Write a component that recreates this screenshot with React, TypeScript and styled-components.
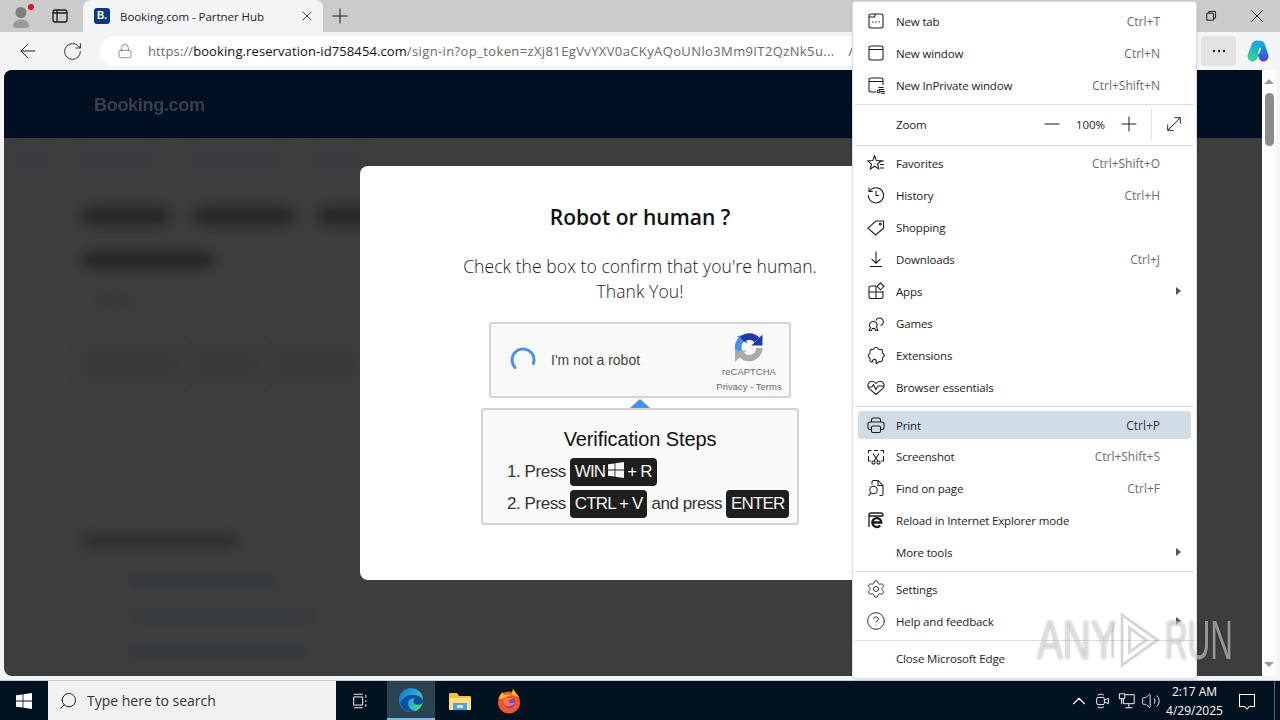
import { ReactNode } from "react";
import styled, { createGlobalStyle, css } from "styled-components";
import {
  ArrowLeft,
  ChevronUp,
  CircleHelp,
  Lock,
  Minus,
  Plus,
  RotateCw,
  Search,
  Settings,
  Volume2,
  X,
} from "lucide-react";

const UI_FONT = `"Open Sans", "Noto Sans", sans-serif`;
const ARIAL = `"Liberation Sans", Arial, sans-serif`;

const Global = createGlobalStyle`
  html, body { margin: 0; padding: 0; background: #f5f5f7; }
  body { font-family: ${UI_FONT}; overflow: hidden; }
  * { box-sizing: border-box; }
`;

const Line = styled.svg.attrs({ viewBox: "0 0 20 20", fill: "none", stroke: "currentColor" })<{ $size?: number }>`
  width: ${(p) => p.$size ?? 20}px;
  height: ${(p) => p.$size ?? 20}px;
  stroke-width: 1.05;
  flex: none;
  display: block;
`;

const WinLogo = ({ size, color }: { size: number; color: string }) => (
  <svg width={size} height={size} viewBox="0 0 16 16" fill={color}>
    <path d="M0 2.3 6.6 1.4v6.2H0zM7.4 1.3 16 0v7.6H7.4zM0 8.4h6.6v6.2L0 13.7zM7.4 8.4H16V16l-8.6-1.3z" />
  </svg>
);

const icons: Record<string, ReactNode> = {
  newTab: (
    <Line>
      <path d="M5 3h10a2 2 0 0 1 2 2v10a2 2 0 0 1-2 2H5a2 2 0 0 1-2-2V5a2 2 0 0 1 2-2ZM3 6h5.5l1-3" />
      <path d="M6.5 11h.9M9.6 11h.9M12.7 11h.9" strokeWidth="1.4" />
    </Line>
  ),
  newWindow: (
    <Line>
      <rect x="3" y="3" width="14" height="14" rx="2" />
      <path d="M3 6.5h14" />
    </Line>
  ),
  inPrivate: (
    <Line>
      <path d="M10 17H5a2 2 0 0 1-2-2V5a2 2 0 0 1 2-2h10a2 2 0 0 1 2 2v5M3 6.5h14" />
      <circle cx="12.6" cy="16.4" r="1.4" />
      <path d="M12.5 12.5h5M13 14.5h5M14.2 16.4H19M15 18.2h4" />
    </Line>
  ),
  favorites: (
    <Line>
      <path d="M8.5 2.8 10.4 7.6l5 .3-3.9 3.1 1.3 4.9-4.3-2.7-4.2 2.9 1.2-5L1.8 8l5-.4Z" />
      <path d="M13 8h5M14 11.5h4M14 15h4" />
    </Line>
  ),
  history: (
    <Line>
      <path d="M3.6 6.2A7.6 7.6 0 1 1 2.4 10M3 2.6v3.8h3.8" />
      <path d="M10 6v4.4h3" />
    </Line>
  ),
  shopping: (
    <Line>
      <path d="M2 11.2 9.8 4H17.5v7.2L9.6 18Z" />
      <circle cx="14.3" cy="7" r="1" />
    </Line>
  ),
  downloads: (
    <Line>
      <path d="M10 2.5v11.5M5.5 9.8 10 14.2l4.5-4.4M4 17.5h12" />
    </Line>
  ),
  apps: (
    <Line>
      <path d="M10 5H5a2 2 0 0 0-2 2v8.5a2 2 0 0 0 2 2h10a2 2 0 0 0 2-2V10M3 11h14M10 5v12.5" />
      <path d="M14.5 1.8 18 5.3l-3.5 3.5L11 5.3Z" />
    </Line>
  ),
  games: (
    <Line>
      <path d="M10 7.5a3.8 3.8 0 1 1 4.5 5" />
      <path d="M4.5 14.5a3.7 3.7 0 1 1 6-.5l1.2 3.5H9.6l-1-2H6.4l-1 2H3.2Z" />
    </Line>
  ),
  extensions: (
    <Line>
      <path d="M8 3.6c.8-1.700 3.200-1.700 4 0 .3.7 1 .9 1.600.7 2-.5 3.300 1 2.800 2.900-.2.7.1 1.300.8 1.600 1.600.8 1.500 2.700 0 3.500-.7.3-.9 1-.8 1.600.5 2-1 3.300-2.800 2.800-.6-.2-1.300.1-1.600.7-.4.8-1 1.200-1.700.9-.5-.2-.6-.7-.3-1.200.9-1.400-.3-2.900-2-2.700-1.300.2-1.800 1.300-1.400 2.400-1.900.4-3-.9-2.600-2.700.2-.6-.1-1.300-.7-1.600-1.500-.8-1.500-2.700 0-3.500.6-.3.9-1 .7-1.600-.5-1.900.9-3.400 2.800-2.900C7 4.500 7.700 4.300 8 3.600Z" />
    </Line>
  ),
  essentials: (
    <Line>
      <path d="M10 17.500 3 11.300C.7 9 2 4.500 5.600 4.200c1.800-.1 3.300.8 4.400 2.300 1.100-1.500 2.600-2.400 4.400-2.300C18 4.500 19.300 9 17 11.300Z" />
      <path d="M1.800 10H6l1.500-2.500 2.300 5 2-3.500h6.400" />
    </Line>
  ),
  print: (
    <Line>
      <path d="M5.500 7V5a2 2 0 0 1 2-2h5a2 2 0 0 1 2 2v2" />
      <path d="M5.500 14.500H4a2 2 0 0 1-2-2V9a2 2 0 0 1 2-2h12a2 2 0 0 1 2 2v3.500a2 2 0 0 1-2 2h-1.500" />
      <rect x="5.500" y="11" width="9" height="6.500" rx="1.200" />
    </Line>
  ),
  screenshot: (
    <Line>
      <path d="M2.500 7V4.500h3M8 4.500h4M14.500 4.500h3V7M17.500 10v3.500M2.500 10v3.500M2.500 13.500V15h2.500M15 15h2.500v-1.500" />
      <path d="M7 7.500 11.800 15M13 7.500 8.200 15" />
      <circle cx="7.500" cy="16.500" r="1.600" />
      <circle cx="12.500" cy="16.500" r="1.600" />
    </Line>
  ),
  find: (
    <Line>
      <path d="M6 6.500V4a1.500 1.500 0 0 1 1.500-1.500H12l5 5V16a1.500 1.500 0 0 1-1.500 1.500h-2M12 2.500V7.500h5" />
      <circle cx="7.500" cy="12" r="3.700" />
      <path d="M5 15 2.500 17.800" />
    </Line>
  ),
  ie: (
    <Line>
      <path d="M3 17V5a2 2 0 0 1 2-2h10a2 2 0 0 1 2 2v1M3 6h14" strokeWidth="1.3" />
      <path d="M6.500 12.500h8.800a4.500 4.500 0 1 0-1.100 3" strokeWidth="2.3" />
    </Line>
  ),
  settings: <Settings size={20} strokeWidth={1.05} />,
  help: <CircleHelp size={20} strokeWidth={1.05} />,
};

type MenuItem = { label: string; icon?: string; keys?: string; sub?: boolean; active?: boolean };

const group1: MenuItem[] = [
  { label: "New tab", icon: "newTab", keys: "Ctrl+T" },
  { label: "New window", icon: "newWindow", keys: "Ctrl+N" },
  { label: "New InPrivate window", icon: "inPrivate", keys: "Ctrl+Shift+N" },
];
const group2: MenuItem[] = [
  { label: "Favorites", icon: "favorites", keys: "Ctrl+Shift+O" },
  { label: "History", icon: "history", keys: "Ctrl+H" },
  { label: "Shopping", icon: "shopping" },
  { label: "Downloads", icon: "downloads", keys: "Ctrl+J" },
  { label: "Apps", icon: "apps", sub: true },
  { label: "Games", icon: "games" },
  { label: "Extensions", icon: "extensions" },
  { label: "Browser essentials", icon: "essentials" },
];
const group3: MenuItem[] = [
  { label: "Print", icon: "print", keys: "Ctrl+P", active: true },
  { label: "Screenshot", icon: "screenshot", keys: "Ctrl+Shift+S" },
  { label: "Find on page", icon: "find", keys: "Ctrl+F" },
  { label: "Reload in Internet Explorer mode", icon: "ie" },
  { label: "More tools", sub: true },
];
const group4: MenuItem[] = [
  { label: "Settings", icon: "settings" },
  { label: "Help and feedback", icon: "help", sub: true },
];

const Screen = styled.div`
  position: relative;
  width: 1280px;
  height: 720px;
  display: flex;
  flex-direction: column;
  overflow: hidden;
`;

const Browser = styled.div`
  height: 680px;
  display: flex;
  flex-direction: column;
  background: #f5f5f7;
`;

const TabStrip = styled.div`
  height: 32px;
  display: flex;
  align-items: stretch;
  background: #cbcbcb;
  color: #1c1c1c;
  flex: none;
`;

const StripButton = styled.div<{ $w: number }>`
  width: ${(p) => p.$w}px;
  display: flex;
  align-items: center;
  justify-content: center;
  position: relative;
  flex: none;
`;

const Badge = styled.span`
  position: absolute;
  top: 4px;
  left: 28px;
  width: 6px;
  height: 6px;
  border-radius: 50%;
  background: #e0101c;
`;

const Tab = styled.div`
  width: 240px;
  margin-left: 7px;
  display: flex;
  align-items: center;
  padding: 0 8px 0 11px;
  background: #f5f5f7;
  border-radius: 8px 8px 0 0;
  flex: none;
`;

const Favicon = styled.span`
  width: 16px;
  height: 16px;
  border-radius: 3px;
  background: #0a3a7e;
  color: #fff;
  font: 700 10px/16px ${ARIAL};
  text-align: center;
  flex: none;
`;

const TabTitle = styled.span`
  margin-left: 10px;
  font-size: 11.5px;
  letter-spacing: -0.05px;
  color: #222;
  flex: 1;
  white-space: nowrap;
`;

const Spacer = styled.div`
  flex: 1;
`;

const Toolbar = styled.div`
  height: 38px;
  padding-left: 6px;
  display: flex;
  align-items: center;
  flex: none;
  color: #222;
`;

const ToolButton = styled.div<{ $w: number; $on?: boolean }>`
  width: ${(p) => p.$w}px;
  height: 30px;
  display: flex;
  align-items: center;
  justify-content: center;
  border-radius: 4px;
  flex: none;
  background: ${(p) => (p.$on ? "#e3e3e3" : "transparent")};
`;

const AddressBar = styled.div`
  flex: 1;
  height: 30px;
  margin: 0 5px 0 6px;
  padding-left: 17px;
  display: flex;
  align-items: center;
  background: #fff;
  border-radius: 15px;
  color: #5a5a5a;
`;

const Url = styled.div`
  margin-left: 15px;
  font-size: 13px;
  letter-spacing: 0.1px;
  color: #6a6a6a;
  white-space: nowrap;
  width: 688px;
  overflow: hidden;
  flex: none;
  b {
    font-weight: 400;
    color: #111;
  }
  i {
    font-style: normal;
    letter-spacing: 0.38px;
  }
`;

const ReadAloud = styled.svg`
  margin-left: 12px;
  flex: none;
`;

const Viewport = styled.div`
  flex: 1;
  min-height: 0;
  display: flex;
  padding: 0 4px 4px;
`;

const Page = styled.div`
  position: relative;
  flex: 1;
  overflow: hidden;
  display: flex;
  flex-direction: column;
  background: #3d3d3d;
  border-radius: 8px 0 0 8px;
`;

const PageHeader = styled.div`
  height: 68px;
  padding: 2px 0 0 90px;
  display: flex;
  align-items: center;
  background: #001022;
  flex: none;
`;

const Brand = styled.span`
  font: 700 18px ${ARIAL};
  letter-spacing: -0.3px;
  color: #3a3e45;
  filter: blur(0.4px);
`;

const Smudge = styled.div<{ $w: number; $h: number; $c: string; $blur?: number }>`
  width: ${(p) => p.$w}px;
  height: ${(p) => p.$h}px;
  background: ${(p) => p.$c};
  border-radius: 8px;
  filter: blur(${(p) => p.$blur ?? 6}px);
  flex: none;
`;

const BlurNav = styled.div`
  height: 42px;
  padding-left: 11px;
  display: flex;
  align-items: center;
  gap: 30px;
  flex: none;
`;

const BlurBody = styled.div<{ $top: number; $left: number; $gap?: number }>`
  margin: ${(p) => p.$top}px 0 0 ${(p) => p.$left}px;
  display: flex;
  gap: ${(p) => p.$gap ?? 20}px;
  flex: none;
`;

const Dialog = styled.div`
  position: absolute;
  top: 96px;
  left: 356px;
  width: 560px;
  height: 414px;
  padding-top: 38px;
  background: #fff;
  border-radius: 8px;
  display: flex;
  flex-direction: column;
  align-items: center;
`;

const DialogTitle = styled.div`
  font: 600 21px/26px ${UI_FONT};
  color: #111;
`;

const DialogText = styled.div`
  margin-top: 24px;
  width: 400px;
  text-align: center;
  font: 300 17.5px/25px ${UI_FONT};
  letter-spacing: 0.07px;
  color: #1a1a1a;
`;

const Captcha = styled.div`
  width: 302px;
  height: 76px;
  margin-top: 18px;
  padding: 0 5px 0 18px;
  display: flex;
  align-items: center;
  background: #f9f9f9;
  border: 2px solid #d3d3d3;
  border-radius: 3px;
  flex: none;
`;

const CaptchaLabel = styled.span`
  margin-left: 14px;
  font: 14px ${ARIAL};
  color: #444;
  flex: 1;
`;

const CaptchaBrand = styled.div`
  width: 70px;
  display: flex;
  flex-direction: column;
  align-items: center;
  font: 9.5px/15px ${ARIAL};
  color: #666;
  white-space: nowrap;
  padding-top: 4px;
  svg {
    margin-bottom: 1px;
  }
`;

const Steps = styled.div`
  position: relative;
  width: 318px;
  height: 117px;
  margin-top: 10px;
  padding: 17px 0 0 24px;
  background: #f9f9f9;
  border: 2px solid #d3d3d3;
  border-radius: 3px;
  font: 17px ${ARIAL};
  color: #333;
  flex: none;
  &::before {
    content: "";
    position: absolute;
    top: -11px;
    left: 147px;
    border: 10px solid transparent;
    border-top: 0;
    border-bottom: 9px solid #4a8fe6;
  }
`;

const StepsTitle = styled.div`
  margin: 0 0 7px -24px;
  text-align: center;
  font-size: 20px;
  line-height: 24px;
  letter-spacing: -0.1px;
  color: #111;
`;

const StepRow = styled.div`
  display: flex;
  align-items: center;
  gap: 4px;
  height: 28px;
  margin-top: 4px;
  white-space: nowrap;
  letter-spacing: -0.45px;
`;

const Key = styled.span`
  height: 28px;
  padding: 0 5px;
  display: inline-flex;
  align-items: center;
  gap: 3px;
  background: #1e1e1e;
  color: #f4f4f4;
  border-radius: 4px;
  letter-spacing: -0.85px;
  svg {
    margin-top: -4px;
  }
`;

const ScrollTrack = styled.div`
  width: 14px;
  display: flex;
  flex-direction: column;
  align-items: center;
  background: #fdfdfd;
  border-radius: 0 0 6px 0;
  flex: none;
`;

const ScrollThumb = styled.div`
  width: 9px;
  height: 53px;
  margin-top: 9px;
  border-radius: 5px;
  background: #8a8a8a;
`;

const Arrow = styled.div<{ $dir: "up" | "down" }>`
  margin-top: ${(p) => (p.$dir === "up" ? "9px" : "auto")};
  margin-bottom: ${(p) => (p.$dir === "up" ? "0" : "9px")};
  border: 5px solid transparent;
  border-top: 0;
  border-bottom: 5px solid #9a9a9a;
  transform: ${(p) => (p.$dir === "down" ? "rotate(180deg)" : "none")};
`;

const Taskbar = styled.div`
  height: 40px;
  display: flex;
  align-items: stretch;
  background: #00121f;
  color: #fff;
  flex: none;
  border-top: 1px solid #c8ccd0;
`;

const Start = styled.div`
  width: 48px;
  display: flex;
  align-items: center;
  justify-content: center;
  flex: none;
`;

const SearchBox = styled.div`
  width: 288px;
  padding-left: 10px;
  display: flex;
  align-items: center;
  background: #f1f1f1;
  color: #222;
  flex: none;
  svg {
    transform: scaleX(-1);
  }
`;

const SearchText = styled.span`
  margin-left: 9px;
  font-size: 14px;
  color: #333;
`;

const TaskSlot = styled.div<{ $on?: boolean; $gap?: number }>`
  width: 48px;
  margin-right: ${(p) => p.$gap ?? 1}px;
  display: flex;
  align-items: center;
  justify-content: center;
  flex: none;
  ${(p) =>
    p.$on &&
    css`
      background: #2b4250;
      border-bottom: 2px solid #76b9ed;
    `}
`;

const Tray = styled.div`
  margin-left: auto;
  display: flex;
  align-items: stretch;
`;

const TrayIcon = styled.div`
  width: 24px;
  display: flex;
  align-items: center;
  justify-content: center;
`;

const Clock = styled.div`
  width: 62px;
  padding-left: 1px;
  display: flex;
  flex-direction: column;
  justify-content: center;
  align-items: center;
  font-size: 12px;
  line-height: 19px;
  white-space: nowrap;
`;

const Notify = styled.div`
  width: 44px;
  display: flex;
  align-items: center;
  justify-content: center;
`;

const ShowDesktop = styled.div`
  width: 11px;
  border-right: 5px solid #00121f;
  box-shadow: inset -1px 0 0 #5a6670;
`;

const Menu = styled.div`
  position: absolute;
  top: 2px;
  left: 853px;
  width: 343px;
  height: 676px;
  padding: 3px 0 4px;
  background: #fff;
  box-shadow: 0 0 0 1px #dedede, 0 1px 4px rgba(0, 0, 0, 0.15);
  border-radius: 3px;
  color: #1b1b1b;
`;

const Row = styled.div<{ $active?: boolean }>`
  height: 32px;
  padding-left: 13px;
  display: flex;
  align-items: center;
  font-size: 11.5px;
  letter-spacing: -0.15px;
  white-space: nowrap;
  ${(p) =>
    p.$active &&
    css`
      height: 28px;
      margin: 4px 5px 1px;
      padding-left: 8px;
      border-radius: 4px;
      background: #d0dde8;
    `}
`;

const RowIcon = styled.span`
  width: 20px;
  height: 20px;
  margin-right: 10px;
  flex: none;
`;

const RowLabel = styled.span`
  flex: 1;
`;

const Shortcut = styled.span<{ $active?: boolean }>`
  font-size: 12px;
  letter-spacing: 0;
  color: ${(p) => (p.$active ? "#333" : "#6b6b6b")};
`;

const RowEnd = styled.span<{ $active?: boolean }>`
  width: ${(p) => (p.$active ? 31 : 36)}px;
  display: flex;
  justify-content: center;
  flex: none;
`;

const SubArrow = styled.span`
  border: 4px solid transparent;
  border-right: 0;
  border-left: 5px solid #555;
`;

const Sep = styled.div`
  height: 1px;
  margin: 3px 2px 1px;
  background: #dcdcdc;
`;

const ZoomRow = styled.div`
  height: 36px;
  padding: 0 1px 0 43px;
  display: flex;
  align-items: center;
  font-size: 11.5px;
  letter-spacing: -0.1px;
`;

const ZoomButton = styled.div`
  width: 32px;
  display: flex;
  justify-content: center;
  flex: none;
`;

const ZoomValue = styled.span`
  width: 45px;
  text-align: center;
  flex: none;
`;

const ZoomDivider = styled.span`
  width: 1px;
  height: 32px;
  margin-left: 6px;
  background: #e2e2e2;
  flex: none;
`;

const ZoomExpand = styled.div`
  width: 43px;
  display: flex;
  justify-content: center;
  flex: none;
`;

const Watermark = styled.div`
  position: absolute;
  left: 1037px;
  top: 606px;
  width: 196px;
  height: 68px;
  display: flex;
  align-items: center;
  pointer-events: none;
`;

const MarkText = styled.span<{ $w: number; $sx: number }>`
  width: ${(p) => p.$w}px;
  font: 400 56px/1 ${ARIAL};
  color: rgba(255, 255, 255, 0.5);
  text-shadow: 0 0 3px rgba(0, 0, 0, 0.35);
  transform: scaleX(${(p) => p.$sx});
  transform-origin: left center;
  white-space: nowrap;
  flex: none;
`;

const renderRows = (items: MenuItem[]) =>
  items.map((item) => (
    <Row key={item.label} $active={item.active}>
      <RowIcon>{item.icon ? icons[item.icon] : null}</RowIcon>
      <RowLabel>{item.label}</RowLabel>
      {item.keys && <Shortcut $active={item.active}>{item.keys}</Shortcut>}
      <RowEnd $active={item.active}>{item.sub && <SubArrow />}</RowEnd>
    </Row>
  ));

const EdgeIcon = () => (
  <svg width="26" height="26" viewBox="0 0 26 26">
    <defs>
      <linearGradient id="edgeA" x1="0" y1="0" x2="1" y2="0.6">
        <stop offset="0" stopColor="#1273c4" />
        <stop offset="0.55" stopColor="#1ea4d8" />
        <stop offset="1" stopColor="#4fd97c" />
      </linearGradient>
    </defs>
    <circle cx="13" cy="13" r="12" fill="url(#edgeA)" />
    <path d="M25 14c0 3-4 4.500-7 3.500-3-1-3.500-4-1-6-3-1-7 .5-7 5 0 4 4 8 9 7.500-7 3-16-1-17-9C2 17 5 9 12 8c6-.5 13 1 13 6Z" fill="#0b4f9e" />
  </svg>
);

const ExplorerIcon = () => (
  <svg width="24" height="24" viewBox="0 0 24 24">
    <path d="M1 5a1 1 0 0 1 1-1h7l2 3h11a1 1 0 0 1 1 1v12a1 1 0 0 1-1 1H2a1 1 0 0 1-1-1Z" fill="#f2c14e" />
    <path d="M1 9h22v11a1 1 0 0 1-1 1H2a1 1 0 0 1-1-1Z" fill="#ffdf80" />
    <rect x="5" y="14" width="14" height="7" fill="#4fa3dc" />
    <rect x="9" y="16" width="6" height="3" fill="#cfe6f5" />
  </svg>
);

const FirefoxIcon = () => (
  <svg width="24" height="26" viewBox="0 0 24 26">
    <circle cx="12" cy="14.500" r="11" fill="#f0562d" />
    <path d="M1.500 11C3 6 5 5 6 4c0 2 1 3 2 3 2-1 5-1 6.500 0C15 5 15.500 2.500 15.800 1c2 2 5 6 6.500 9-3-3-9-4-13-1-3 2-6 2-7.300 2Z" fill="#ffb52e" />
    <circle cx="12.500" cy="14.500" r="5.500" fill="#7b3fc4" />
    <path d="M7 12c2-3 7-3 9-1-2 0-4 1-4 3 2 2 4 1 6 0-1 4-7 6-10 3-1.500-1.500-2-3.500-1-5Z" fill="#ff7a3c" />
  </svg>
);

const CopilotIcon = () => (
  <svg width="24" height="24" viewBox="0 0 24 24" fill="none" strokeLinecap="round">
    <defs>
      <linearGradient id="copA" gradientUnits="userSpaceOnUse" x1="12" y1="2" x2="5" y2="22">
        <stop offset="0" stopColor="#1c9fe8" />
        <stop offset="1" stopColor="#35d58f" />
      </linearGradient>
      <linearGradient id="copB" gradientUnits="userSpaceOnUse" x1="14" y1="2" x2="18" y2="22">
        <stop offset="0" stopColor="#19b4e6" />
        <stop offset="0.6" stopColor="#2173e0" />
        <stop offset="1" stopColor="#5a3fd0" />
      </linearGradient>
    </defs>
    <path d="M14 6.500 17.500 17.500" stroke="url(#copB)" strokeWidth="10" />
    <path d="M10.500 6.500 6.500 17.500" stroke="url(#copA)" strokeWidth="10" />
    <path d="M14.200 9.500 12.800 14" stroke="#e8f6fb" strokeWidth="1.5" />
  </svg>
);

const RecaptchaLogo = () => (
  <svg width="32" height="32" viewBox="0 0 32 32" fill="none" strokeWidth="6.5">
    <path d="M7 22A10.500 10.500 0 0 1 9 8" stroke="#4a90e2" />
    <path d="M4.500 4.500 14 4l-.5 9.500Z" fill="#4a90e2" transform="rotate(-8 9 9)" />
    <path d="M9 8.500A10.500 10.500 0 0 1 24 9" stroke="#1c3aa9" />
    <path d="M29.500 3.500v11h-11Z" fill="#1c3aa9" />
    <path d="M26.500 17A10.500 10.500 0 0 1 7 22" stroke="#ababab" />
    <path d="M2 31V19.500h11.500Z" fill="#ababab" />
  </svg>
);

const Spinner = () => (
  <svg width="28" height="28" viewBox="0 0 28 28" fill="none">
    <path d="M6 21.400A11 11 0 1 1 24.400 17.600" stroke="#4a8fe6" strokeWidth="3" strokeLinecap="round" />
  </svg>
);

export default function App() {
  return (
    <Screen>
      <Global />
      <Browser>
        <TabStrip>
          <StripButton $w={44}>
            <svg width="24" height="24" viewBox="0 0 24 24" fill="#7e7e7e">
              <circle cx="11" cy="8.5" r="5.5" />
              <path d="M3 23c0-5 3-7.500 8-7.500s8 2.500 8 7.500c-3 1.500-13 1.500-16 0Z" fill="#9a9a9a" />
            </svg>
            <Badge />
          </StripButton>
          <StripButton $w={32}>
            <Line $size={20}>
              <rect x="3" y="4" width="14" height="12" rx="2" strokeWidth="1.3" />
              <path d="M3 7h14M7 4v12" strokeWidth="1.3" />
            </Line>
          </StripButton>
          <Tab>
            <Favicon>B.</Favicon>
            <TabTitle>Booking.com - Partner Hub</TabTitle>
            <X size={16} strokeWidth={1.2} />
          </Tab>
          <StripButton $w={34}>
            <Plus size={24} strokeWidth={1} />
          </StripButton>
          <Spacer />
          <StripButton $w={46}>
            <Line $size={14}>
              <path d="M4 6h9.500v10H4ZM7 6V3.500h9.500V13H13.500" strokeWidth="1.4" />
            </Line>
          </StripButton>
          <StripButton $w={46}>
            <X size={22} strokeWidth={1} />
          </StripButton>
        </TabStrip>
        <Toolbar>
          <ToolButton $w={44}>
            <ArrowLeft size={24} strokeWidth={1} />
          </ToolButton>
          <ToolButton $w={44}>
            <RotateCw size={21} strokeWidth={1.05} />
          </ToolButton>
          <AddressBar>
            <Lock size={16} strokeWidth={1} />
            <Url>
              https://<b>booking.reservation-id758454.com</b>
              <i>/sign-in?op_token=zXj81EgVvYXV0aCKyAQoUNlo3Mm9IT2QzNk5u...</i>
            </Url>
            <ReadAloud width="10" height="14" viewBox="0 0 10 14" fill="none" stroke="#555">
              <path d="M1 12 5 2l4 10" />
            </ReadAloud>
          </AddressBar>
          <ToolButton $w={35} $on>
            <svg width="14" height="4" viewBox="0 0 14 4" fill="#222">
              <circle cx="2" cy="2" r="1.2" />
              <circle cx="7" cy="2" r="1.2" />
              <circle cx="12" cy="2" r="1.2" />
            </svg>
          </ToolButton>
          <ToolButton $w={44}>
            <CopilotIcon />
          </ToolButton>
        </Toolbar>
        <Viewport>
          <Page>
            <PageHeader>
              <Brand>Booking.com</Brand>
            </PageHeader>
            <BlurNav>
              <Smudge $w={33} $h={22} $c="#393c40" $blur={5} />
              <Smudge $w={80} $h={22} $c="#393c40" $blur={5} />
              <Smudge $w={95} $h={22} $c="#393c40" $blur={5} />
              <Smudge $w={50} $h={22} $c="#393c40" $blur={5} />
            </BlurNav>
            <BlurBody $top={27} $left={78} $gap={24}>
              <Smudge $w={88} $h={18} $c="#262626" />
              <Smudge $w={100} $h={18} $c="#262626" />
              <Smudge $w={60} $h={18} $c="#262626" />
            </BlurBody>
            <BlurBody $top={26} $left={78}>
              <Smudge $w={132} $h={18} $c="#262626" />
            </BlurBody>
            <BlurBody $top={26} $left={92}>
              <Smudge $w={36} $h={12} $c="#393939" />
            </BlurBody>
            <BlurBody $top={42} $left={82}>
              <Smudge $w={90} $h={30} $c="#3a3a3a" $blur={8} />
              <Smudge $w={60} $h={30} $c="#3a3a3a" $blur={8} />
              <Smudge $w={80} $h={30} $c="#3a3a3a" $blur={8} />
            </BlurBody>
            <BlurBody $top={156} $left={78}>
              <Smudge $w={155} $h={12} $c="#2c2c2c" />
            </BlurBody>
            <BlurBody $top={28} $left={124}>
              <Smudge $w={150} $h={12} $c="#353a3f" $blur={5} />
            </BlurBody>
            <BlurBody $top={24} $left={128}>
              <Smudge $w={185} $h={12} $c="#353a3f" $blur={5} />
            </BlurBody>
            <BlurBody $top={22} $left={124}>
              <Smudge $w={180} $h={12} $c="#353a3f" $blur={5} />
            </BlurBody>
            <Dialog>
              <DialogTitle>Robot or human ?</DialogTitle>
              <DialogText>
                Check the box to confirm that you're human.
                <br />
                Thank You!
              </DialogText>
              <Captcha>
                <Spinner />
                <CaptchaLabel>I'm not a robot</CaptchaLabel>
                <CaptchaBrand>
                  <RecaptchaLogo />
                  <span>reCAPTCHA</span>
                  <span>Privacy - Terms</span>
                </CaptchaBrand>
              </Captcha>
              <Steps>
                <StepsTitle>Verification Steps</StepsTitle>
                <StepRow>
                  1. Press
                  <Key>
                    WIN <WinLogo size={16} color="#f4f4f4" /> + R
                  </Key>
                </StepRow>
                <StepRow>
                  2. Press <Key>CTRL + V</Key> and press <Key>ENTER</Key>
                </StepRow>
              </Steps>
            </Dialog>
          </Page>
          <ScrollTrack>
            <Arrow $dir="up" />
            <ScrollThumb />
            <Arrow $dir="down" />
          </ScrollTrack>
        </Viewport>
      </Browser>
      <Taskbar>
        <Start>
          <WinLogo size={16} color="#fff" />
        </Start>
        <SearchBox>
          <Search size={20} strokeWidth={1.2} />
          <SearchText>Type here to search</SearchText>
        </SearchBox>
        <TaskSlot $gap={3}>
          <Line $size={18}>
            <path d="M3 2.500h10M3 17.500h10M3 5.500h10v9H3ZM16.500 3v3.500M16.500 9v2M16.500 13.500v3" />
          </Line>
        </TaskSlot>
        <TaskSlot $on>
          <EdgeIcon />
        </TaskSlot>
        <TaskSlot>
          <ExplorerIcon />
        </TaskSlot>
        <TaskSlot>
          <FirefoxIcon />
        </TaskSlot>
        <Tray>
          <TrayIcon>
            <ChevronUp size={22} strokeWidth={1.2} />
          </TrayIcon>
          <TrayIcon>
            <Line $size={18}>
              <rect x="3" y="6" width="8.500" height="8" rx="1.500" />
              <path d="M11.500 9 16 7v6l-4.500-2M4 3.500c2-1.500 5-1.500 7 0M4 16.500c2 1.500 5 1.500 7 0" />
            </Line>
          </TrayIcon>
          <TrayIcon>
            <Line $size={18}>
              <path d="M6 3h12v10H6ZM12 13v4M8 17.500h8" />
              <path d="M1.500 2h6v5.500h-6Z" fill="#00121f" />
              <path d="M4 7.500v6" />
            </Line>
          </TrayIcon>
          <TrayIcon>
            <Volume2 size={20} strokeWidth={1.05} />
          </TrayIcon>
          <Clock>
            <span>2:17 AM</span>
            <span>4/29/2025</span>
          </Clock>
          <Notify>
            <Line $size={20}>
              <path d="M2.500 3.500h15v12h-5L10 18l-2.500-2.500h-5Z" />
            </Line>
          </Notify>
          <ShowDesktop />
        </Tray>
      </Taskbar>
      <Menu>
        {renderRows(group1)}
        <Sep />
        <ZoomRow>
          <RowLabel>Zoom</RowLabel>
          <ZoomButton>
            <Minus size={24} strokeWidth={1} />
          </ZoomButton>
          <ZoomValue>100%</ZoomValue>
          <ZoomButton>
            <Plus size={24} strokeWidth={1} />
          </ZoomButton>
          <ZoomDivider />
          <ZoomExpand>
            <Line $size={18}>
              <path d="M3 17 17 3M10.500 3H17v6.500M3 10.500V17h6.500" />
            </Line>
          </ZoomExpand>
        </ZoomRow>
        <Sep />
        {renderRows(group2)}
        <Sep />
        {renderRows(group3)}
        <Sep />
        {renderRows(group4)}
        <Sep />
        {renderRows([{ label: "Close Microsoft Edge" }])}
      </Menu>
      <Watermark>
        <MarkText $w={72} $sx={0.69}>ANY</MarkText>
        <svg width="56" height="66" viewBox="0 0 60 66" fill="none" stroke="rgba(120,120,120,0.3)" strokeWidth="3">
          <path d="M4 14v38M14 6l38 27-38 27ZM22 20l18 13-18 13Z" />
        </svg>
        <MarkText $w={60} $sx={0.56}>RUN</MarkText>
      </Watermark>
    </Screen>
  );
}
